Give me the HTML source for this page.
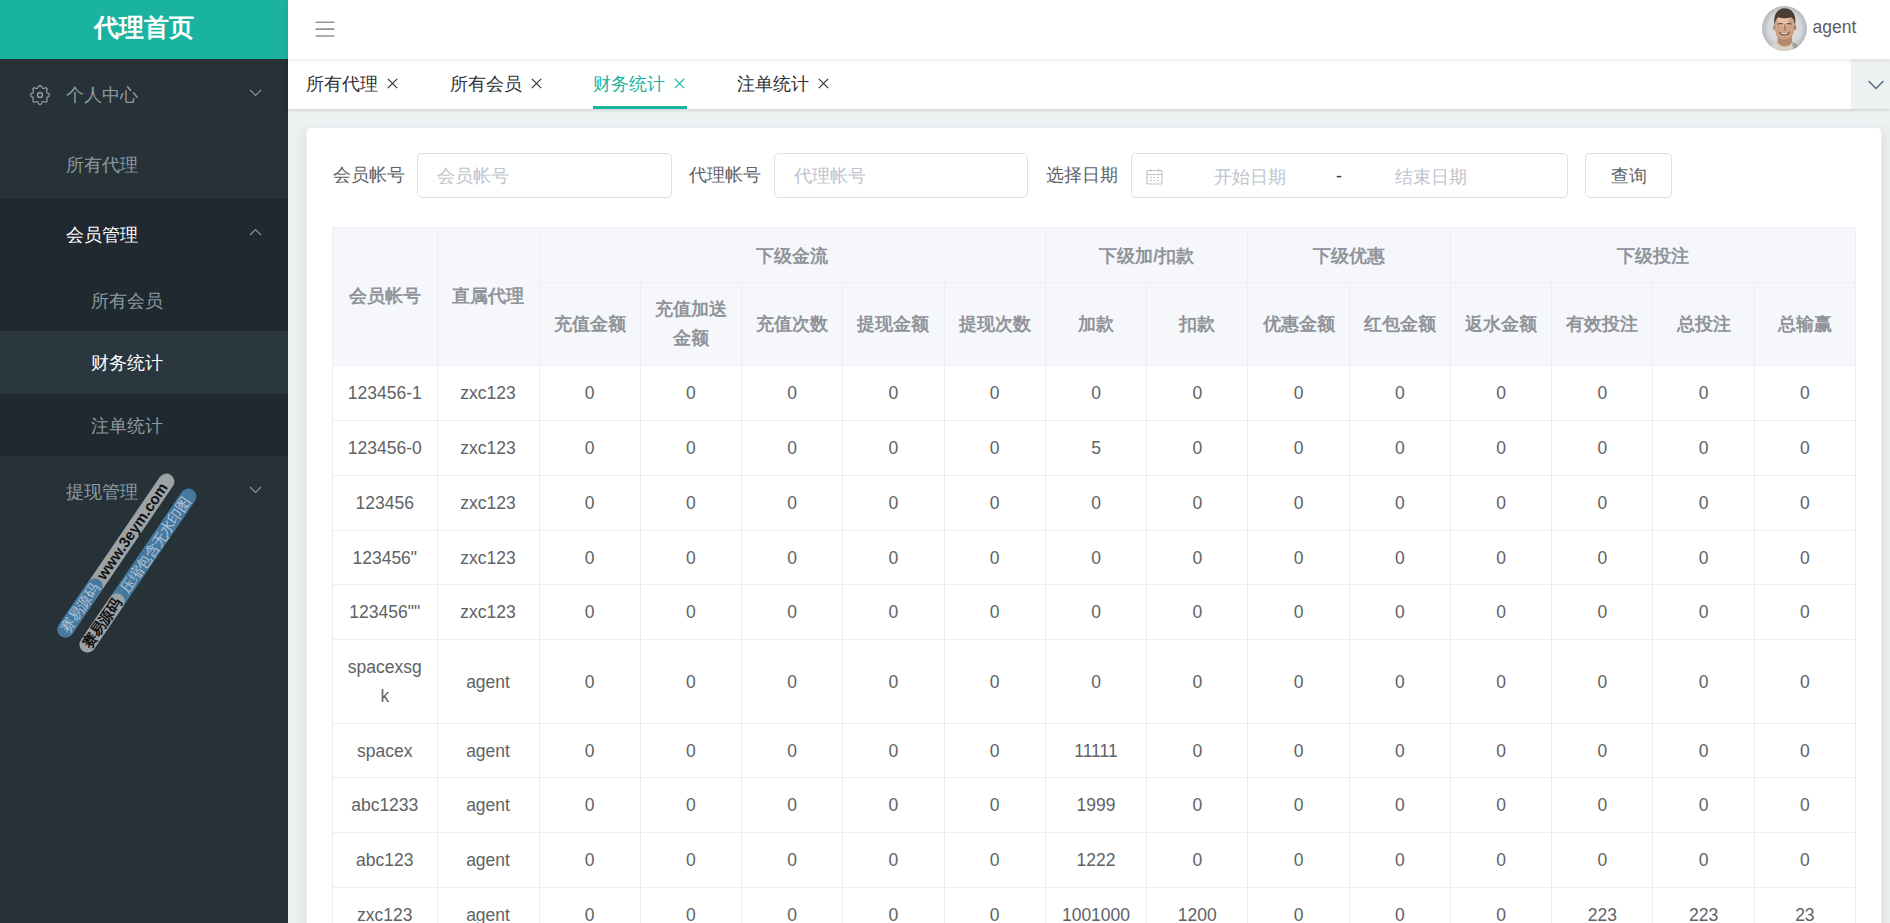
<!DOCTYPE html>
<html lang="zh">
<head>
<meta charset="utf-8">
<title>代理首页</title>
<style>
*{box-sizing:border-box}
html,body{margin:0;padding:0}
body{width:1890px;height:923px;overflow:hidden;background:#eef1f2;font-family:"Liberation Sans",sans-serif;font-size:17.5px;color:#606266;position:relative}
.sidebar{position:absolute;left:0;top:0;width:288px;height:923px;background:#263238;overflow:hidden}
.logo{position:absolute;left:0;top:0;width:288px;height:59px;background:#1ab3a0;color:#fff;font-weight:bold;font-size:25px;line-height:55px;text-align:center}
.mi{position:absolute;left:0;width:288px;height:70px;line-height:72px;color:#8d9aa1;font-size:17.5px;padding-left:66px}
.mi.sub{height:62.5px;line-height:64.5px;padding-left:91px}
.mi.on{color:#fff}
.subbg{position:absolute;left:0;top:199px;width:288px;height:257px;background:#1f292f}
.actbg{position:absolute;left:0;top:331px;width:288px;height:63px;background:#2b373e}
.chev{position:absolute;left:248px;width:15px;height:15px}
.navbar{position:absolute;left:288px;top:0;width:1602px;height:59px;background:#fff;box-shadow:0 1px 5px rgba(0,21,41,.10)}
.tabs{position:absolute;left:288px;top:59px;width:1602px;height:50px;background:#fff;box-shadow:0 1px 4px rgba(0,0,0,.14),0 0 4px rgba(0,0,0,.04)}
.tab{position:absolute;top:0;height:50px;line-height:50px;font-size:17.5px;color:#303133;white-space:nowrap}
.tab.on{color:#1ab3a0}
.tab svg{position:absolute;top:19px;left:81px}
.uline{position:absolute;left:305px;top:47px;width:94px;height:3px;background:#1ab3a0}
.more{position:absolute;right:0;top:0;width:39px;height:50px;background:#eef1f2}
.card{position:absolute;left:306px;top:127px;width:1576px;height:900px;background:#fff;border:1px solid #ebeef5;border-radius:5px;box-shadow:0 2px 15px rgba(0,0,0,.10);clip-path:inset(-1px -40px -40px -40px)}
.lbl{position:absolute;top:153px;height:45px;line-height:45px;font-size:17.5px;color:#606266}
.inp{position:absolute;top:153px;height:45px;border:1px solid #dcdfe6;border-radius:5px;background:#fff;line-height:45px;font-size:17.5px;color:#c0c4cc;padding-left:19px}
.btn{position:absolute;top:153px;left:1585px;width:87px;height:45px;border:1px solid #dcdfe6;border-radius:5px;background:#fff;line-height:44px;text-align:center;color:#606266;font-size:17.5px}
table{position:absolute;left:332px;top:227px;width:1524px;border-collapse:separate;border-spacing:0;table-layout:fixed;border-top:1px solid #ebeef5;border-left:1px solid #ebeef5;font-size:17.5px}
th,td{border-right:1px solid #ebeef5;border-bottom:1px solid #ebeef5;text-align:center;padding:2px 6px 0;line-height:28.75px;overflow:hidden}
th{background:#f5f7fa;color:#909399;font-weight:bold}
td{color:#606266}
.pill{position:absolute;width:195px;height:16px;border-radius:8px;transform-origin:0 50%;transform:rotate(-55.7deg);font-size:14.4px;line-height:16px;white-space:nowrap}
.pill .seg{position:absolute;left:0;top:0;width:67.6px;height:16px;border-radius:8px;text-align:center}
.pill .txt{position:absolute;top:0}
</style>
</head>
<body>
<div class="sidebar">
  <div class="subbg"></div>
  <div class="actbg"></div>
  <div class="logo">代理首页</div>
  <svg style="position:absolute;left:29px;top:83.850px" width="22" height="22" viewBox="0 0 22 22" fill="none" stroke="#8d9aa1" stroke-width="1.350"><circle cx="11" cy="11" r="2.500"/><path d="M11.00 1.60 L11.37 1.64 L11.73 1.75 L12.07 1.95 L12.39 2.24 L12.63 2.81 L12.83 3.39 L13.06 3.70 L13.29 3.94 L13.54 4.12 L13.79 4.26 L14.07 4.34 L14.37 4.38 L14.71 4.38 L15.09 4.32 L15.64 4.06 L16.21 3.82 L16.64 3.84 L17.02 3.95 L17.36 4.12 L17.65 4.35 L17.88 4.64 L18.05 4.98 L18.16 5.36 L18.18 5.79 L17.94 6.36 L17.68 6.91 L17.62 7.29 L17.62 7.63 L17.66 7.93 L17.74 8.21 L17.88 8.46 L18.06 8.71 L18.30 8.94 L18.61 9.17 L19.19 9.37 L19.76 9.61 L20.05 9.93 L20.25 10.27 L20.36 10.63 L20.40 11.00 L20.36 11.37 L20.25 11.73 L20.05 12.07 L19.76 12.39 L19.19 12.63 L18.61 12.83 L18.30 13.06 L18.06 13.29 L17.88 13.54 L17.74 13.79 L17.66 14.07 L17.62 14.37 L17.62 14.71 L17.68 15.09 L17.94 15.64 L18.18 16.21 L18.16 16.64 L18.05 17.02 L17.88 17.36 L17.65 17.65 L17.36 17.88 L17.02 18.05 L16.64 18.16 L16.21 18.18 L15.64 17.94 L15.09 17.68 L14.71 17.62 L14.37 17.62 L14.07 17.66 L13.79 17.74 L13.54 17.88 L13.29 18.06 L13.06 18.30 L12.83 18.61 L12.63 19.19 L12.39 19.76 L12.07 20.05 L11.73 20.25 L11.37 20.36 L11.00 20.40 L10.63 20.36 L10.27 20.25 L9.93 20.05 L9.61 19.76 L9.37 19.19 L9.17 18.61 L8.94 18.30 L8.71 18.06 L8.46 17.88 L8.21 17.74 L7.93 17.66 L7.63 17.62 L7.29 17.62 L6.91 17.68 L6.36 17.94 L5.79 18.18 L5.36 18.16 L4.98 18.05 L4.64 17.88 L4.35 17.65 L4.12 17.36 L3.95 17.02 L3.84 16.64 L3.82 16.21 L4.06 15.64 L4.32 15.09 L4.38 14.71 L4.38 14.37 L4.34 14.07 L4.26 13.79 L4.12 13.54 L3.94 13.29 L3.70 13.06 L3.39 12.83 L2.81 12.63 L2.24 12.39 L1.95 12.07 L1.75 11.73 L1.64 11.37 L1.60 11.00 L1.64 10.63 L1.75 10.27 L1.95 9.93 L2.24 9.61 L2.81 9.37 L3.39 9.17 L3.70 8.94 L3.94 8.71 L4.12 8.46 L4.26 8.21 L4.34 7.93 L4.38 7.63 L4.38 7.29 L4.32 6.91 L4.06 6.36 L3.82 5.79 L3.84 5.36 L3.95 4.98 L4.12 4.64 L4.35 4.35 L4.64 4.12 L4.98 3.95 L5.36 3.84 L5.79 3.82 L6.36 4.06 L6.91 4.32 L7.29 4.38 L7.63 4.38 L7.93 4.34 L8.21 4.26 L8.46 4.12 L8.71 3.94 L8.94 3.70 L9.17 3.39 L9.37 2.81 L9.61 2.24 L9.93 1.95 L10.27 1.75 L10.63 1.64Z" stroke-linejoin="round"/></svg>
  <div class="mi" style="top:59px">个人中心</div>
  <svg class="chev" style="top:85px" viewBox="0 0 15 15" fill="none" stroke="#8a969d" stroke-width="1.1"><path d="M2 5l5.500 5.500L13 5"/></svg>
  <div class="mi" style="top:129px">所有代理</div>
  <div class="mi on" style="top:199px">会员管理</div>
  <svg class="chev" style="top:224.5px" viewBox="0 0 15 15" fill="none" stroke="#8a969d" stroke-width="1.1"><path d="M2 10l5.500-5.500L13 10"/></svg>
  <div class="mi sub" style="top:269px">所有会员</div>
  <div class="mi sub on" style="top:331px">财务统计</div>
  <div class="mi sub" style="top:394px">注单统计</div>
  <div class="mi" style="top:456px">提现管理</div>
  <svg class="chev" style="top:481.5px" viewBox="0 0 15 15" fill="none" stroke="#8a969d" stroke-width="1.1"><path d="M2 5l5.500 5.500L13 5"/></svg>
</div>

<div class="tabs">
  <div class="tab" style="left:18px">所有代理<svg width="11" height="11" viewBox="0 0 11 11" stroke="#303133" stroke-width="1.2"><path d="M.8.8l9.400 9.400M10.200.8L.8 10.200"/></svg></div>
  <div class="tab" style="left:162px">所有会员<svg width="11" height="11" viewBox="0 0 11 11" stroke="#303133" stroke-width="1.2"><path d="M.8.8l9.400 9.400M10.200.8L.8 10.200"/></svg></div>
  <div class="tab on" style="left:305px">财务统计<svg width="11" height="11" viewBox="0 0 11 11" stroke="#1ab3a0" stroke-width="1.2"><path d="M.8.8l9.400 9.400M10.200.8L.8 10.200"/></svg></div>
  <div class="tab" style="left:449px">注单统计<svg width="11" height="11" viewBox="0 0 11 11" stroke="#303133" stroke-width="1.2"><path d="M.8.8l9.400 9.400M10.200.8L.8 10.200"/></svg></div>
  <div class="uline"></div>
  <div class="more"><svg style="position:absolute;left:16px;top:18.5px" width="18" height="14" viewBox="0 0 18 14" fill="none" stroke="#4d6680" stroke-width="1.3"><path d="M1.500 3l7.500 7.500L16.500 3"/></svg></div>
</div>
<div class="navbar">
  <svg style="position:absolute;left:26.5px;top:19.5px" width="20" height="18" viewBox="0 0 20 18" stroke="#909399" stroke-width="1.6"><path d="M.5 2.300h19M.5 9.100h19M.5 16h19"/></svg>
  <svg style="position:absolute;left:1474px;top:6px" width="45" height="45" viewBox="0 0 45 45">
    <defs><clipPath id="av"><circle cx="22.500" cy="22.500" r="22.500"/></clipPath>
    <radialGradient id="avbg" cx="50%" cy="50%" r="52%"><stop offset="0" stop-color="#e6e6e8"/><stop offset=".7" stop-color="#d6d7da"/><stop offset="1" stop-color="#b2b3b7"/></radialGradient>
    <filter id="bl" x="-10%" y="-10%" width="120%" height="120%"><feGaussianBlur stdDeviation=".55"/></filter></defs>
    <g clip-path="url(#av)">
      <rect width="45" height="45" fill="url(#avbg)"/>
      <g filter="url(#bl)">
      <path d="M7 45c.5-5 4-7.500 9-9l13.500-.5c5 1.500 8 4 9 9.500z" fill="#d9d3c6"/>
      <path d="M30 36c4 1 7 3.500 8.500 9h-7z" fill="#8f8a80" opacity=".7"/>
      <path d="M15.500 30h14.500v6.500c-2 3-5 4-7.500 4s-5-1.500-7-4z" fill="#b88b6e"/>
      <path d="M12.800 20c-.3-7 2.500-11.500 9.700-11.500s10.500 4.500 10.200 11.500c-.2 6-1.500 9.500-4 12-1.800 1.800-4 2.600-6.200 2.600s-4.300-.8-6-2.600c-2.500-2.500-3.500-6-3.700-12z" fill="#cfa283"/>
      <path d="M15 13c2-2.500 5-3.500 8-3.500 2.500 0 4 .6 5 1.500-1 3-2 6-2.500 9-1.500.6-4 .6-6 0-2-1-4-4-4.500-7z" fill="#e8c9b0" opacity=".8"/>
      <ellipse cx="12.300" cy="21.500" rx="1.300" ry="2.600" fill="#b98c6f"/><ellipse cx="33" cy="21.500" rx="1.300" ry="2.600" fill="#a87d63"/>
      <path d="M12.600 19.500c-1.800-9 2-17.300 10-17.300 8.400 0 12.300 8 10.300 17.300-.5-4-1.400-7-3.400-8.200-4.500 1.200-9 1.200-13.500 0-2 1.500-2.900 4.500-3.400 8.200z" fill="#4b3d34"/>
      <path d="M16 18.300c1.500-1 3.500-1 5 0M24.500 18.300c1.500-1 3.500-1 5 0" stroke="#5a4236" stroke-width="1.100" fill="none"/>
      <path d="M22.500 18c.8 2.500.9 4.500.5 6.500" stroke="#8d654f" stroke-width="1.200" fill="none" opacity=".8"/>
      <path d="M16.800 25.500c3 2.500 8.500 2.500 11.500-.3-.5 2.800-3 4.400-5.800 4.400s-5.200-1.500-5.700-4.100z" fill="#6b4537"/>
      <path d="M18.500 26.600c2.500 1.100 5.500 1.100 8 0-.8 1.300-2.300 1.800-4 1.800s-3.200-.5-4-1.800z" fill="#f4efe8"/>
      <path d="M14.500 27c1.500 5 4.500 8 8 8s6.500-3 8-8c-1 5-4.500 6.500-8 6.500s-7-1.500-8-6.500z" fill="#8d6a55" opacity=".55"/>
      </g>
    </g>
  </svg>
  <div style="position:absolute;left:1524.5px;top:0;line-height:55px;font-size:17.5px;color:#5a5e66">agent</div>
</div>

<div class="card"></div>
<div class="lbl" style="left:333px">会员帐号</div>
<div class="inp" style="left:417px;width:255px">会员帐号</div>
<div class="lbl" style="left:689px">代理帐号</div>
<div class="inp" style="left:774px;width:254px">代理帐号</div>
<div class="lbl" style="left:1046px">选择日期</div>
<div class="inp" style="left:1131px;width:437px;padding:0">
  <svg style="position:absolute;left:14px;top:14px" width="17" height="17" viewBox="0 0 17 17" fill="none" stroke="#c0c4cc" stroke-width="1.2"><rect x="1" y="2.500" width="15" height="13.500" rx="1"/><path d="M1 6.500h15M4.500.8v3M12.500.8v3M4 9.500h2M7.500 9.500h2M11 9.500h2M4 12.500h2M7.500 12.500h2M11 12.500h2"/></svg>
  <span style="position:absolute;left:82px;top:1px">开始日期</span>
  <span style="position:absolute;left:204px;top:0;color:#303133">-</span>
  <span style="position:absolute;left:263px;top:1px">结束日期</span>
</div>
<div class="btn">查询</div>

<table>
<colgroup><col style="width:104.500px"><col style="width:102px"><col style="width:101.250px"><col style="width:101.250px"><col style="width:101.250px"><col style="width:101.250px"><col style="width:101.250px"><col style="width:101.250px"><col style="width:101.250px"><col style="width:101.250px"><col style="width:101.250px"><col style="width:101.250px"><col style="width:101.250px"><col style="width:101.250px"><col style="width:101.250px"></colgroup>
<thead>
<tr style="height:55px"><th rowspan="2" style="padding-top:0">会员帐号</th><th rowspan="2" style="padding-top:0">直属代理</th><th colspan="5">下级金流</th><th colspan="2">下级加/扣款</th><th colspan="2">下级优惠</th><th colspan="4">下级投注</th></tr>
<tr style="height:82.5px"><th>充值金额</th><th style="padding:0 12px">充值加送金额</th><th>充值次数</th><th>提现金额</th><th>提现次数</th><th>加款</th><th>扣款</th><th>优惠金额</th><th>红包金额</th><th>返水金额</th><th>有效投注</th><th>总投注</th><th>总输赢</th></tr>
</thead>
<tbody>
<tr style="height:55px"><td>123456-1</td><td>zxc123</td><td>0</td><td>0</td><td>0</td><td>0</td><td>0</td><td>0</td><td>0</td><td>0</td><td>0</td><td>0</td><td>0</td><td>0</td><td>0</td></tr>
<tr style="height:55px"><td>123456-0</td><td>zxc123</td><td>0</td><td>0</td><td>0</td><td>0</td><td>0</td><td>5</td><td>0</td><td>0</td><td>0</td><td>0</td><td>0</td><td>0</td><td>0</td></tr>
<tr style="height:55px"><td>123456</td><td>zxc123</td><td>0</td><td>0</td><td>0</td><td>0</td><td>0</td><td>0</td><td>0</td><td>0</td><td>0</td><td>0</td><td>0</td><td>0</td><td>0</td></tr>
<tr style="height:54px"><td>123456"</td><td>zxc123</td><td>0</td><td>0</td><td>0</td><td>0</td><td>0</td><td>0</td><td>0</td><td>0</td><td>0</td><td>0</td><td>0</td><td>0</td><td>0</td></tr>
<tr style="height:55px"><td>123456""</td><td>zxc123</td><td>0</td><td>0</td><td>0</td><td>0</td><td>0</td><td>0</td><td>0</td><td>0</td><td>0</td><td>0</td><td>0</td><td>0</td><td>0</td></tr>
<tr style="height:84px"><td>spacexsg<br>k</td><td>agent</td><td>0</td><td>0</td><td>0</td><td>0</td><td>0</td><td>0</td><td>0</td><td>0</td><td>0</td><td>0</td><td>0</td><td>0</td><td>0</td></tr>
<tr style="height:54px"><td>spacex</td><td>agent</td><td>0</td><td>0</td><td>0</td><td>0</td><td>0</td><td>11111</td><td>0</td><td>0</td><td>0</td><td>0</td><td>0</td><td>0</td><td>0</td></tr>
<tr style="height:55px"><td>abc1233</td><td>agent</td><td>0</td><td>0</td><td>0</td><td>0</td><td>0</td><td>1999</td><td>0</td><td>0</td><td>0</td><td>0</td><td>0</td><td>0</td><td>0</td></tr>
<tr style="height:55px"><td>abc123</td><td>agent</td><td>0</td><td>0</td><td>0</td><td>0</td><td>0</td><td>1222</td><td>0</td><td>0</td><td>0</td><td>0</td><td>0</td><td>0</td><td>0</td></tr>
<tr style="height:55px"><td>zxc123</td><td>agent</td><td>0</td><td>0</td><td>0</td><td>0</td><td>0</td><td>1001000</td><td>1200</td><td>0</td><td>0</td><td>0</td><td>223</td><td>223</td><td>23</td></tr>
</tbody>
</table>

<div class="wm" style="position:absolute;left:0;top:0;width:288px;height:923px;overflow:hidden;pointer-events:none">
  <div class="pill" style="left:61.2px;top:627.9px;background:#9da2a5"><span class="seg" style="background:#46799f;color:#b5c6d8">赛易源码</span><span class="txt" style="left:70px;color:#111;font-weight:bold;font-size:15.2px">www.3eym.com</span></div>
  <div class="pill" style="left:82.9px;top:643.1px;background:#46799f"><span class="seg" style="background:#9da2a5;color:#111;font-weight:bold">赛易源码</span><span class="txt" style="left:72.500px;color:#b5c6d8">压缩包含无水印图</span></div>
</div>
</body>
</html>
